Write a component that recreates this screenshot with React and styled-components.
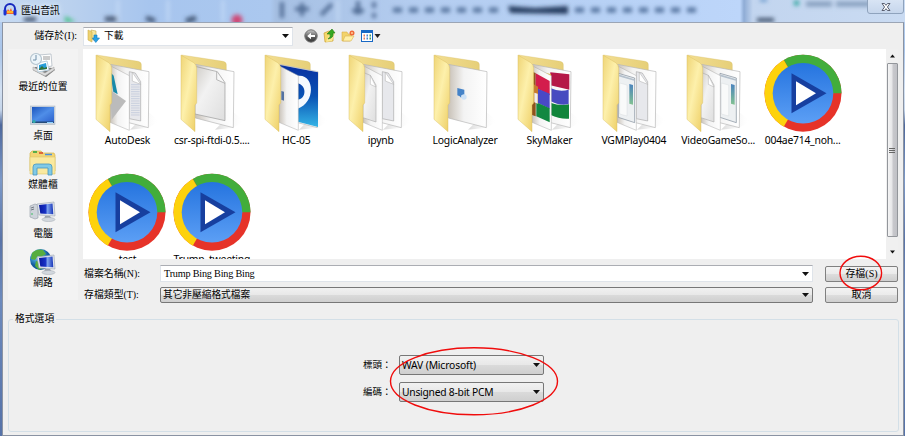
import React from "react";
import styled, { createGlobalStyle } from "styled-components";

const Global = createGlobalStyle`
  * { box-sizing: border-box; }
  body { margin: 0; overflow: hidden; background: #f0f0f0; }
`;
const mixed = `"Liberation Serif", "Noto Sans CJK TC", serif`;
const sans = `"Noto Sans", "Noto Sans CJK TC", sans-serif`;

const Window = styled.div`
  position: relative;
  width: 905px;
  height: 436px;
  display: flex;
  flex-direction: column;
  overflow: hidden;
  color: #000;
  font: 10px/16px ${sans};
  background: linear-gradient(#bcd3f1 0, #a9c5ea 50px, #d3e1f2 90px, #c5d5ea 110px, #4e689c 125px, #7c99c8 180px, #5a74a8 240px, #6c8abd 300px, #5572a8 436px);
`;
const TitleBar = styled.header`
  position: relative;
  display: flex;
  align-items: flex-start;
  height: 22px;
  background: linear-gradient(90deg, #c6daf2 0, #bad1ee 70px, #a7c5ee 150px, #abc8ef 270px, #a6c0e3 275px, #b4cdf0 420px, #b7d1f5 600px, #bdd6fa 740px, #8facd5 744px, #c2d5ef 753px, #cadbf2 905px);
`;
const Backdrop = styled.svg`
  position: absolute;
  inset: 0;
`;
const AppIcon = styled.svg`
  position: relative;
  margin: 3px 0 0 3px;
`;
const Title = styled.h1`
  position: relative;
  margin: 2px 0 0 4px;
  font: 10px/16px ${sans};
  letter-spacing: -0.4px;
  text-shadow: 0 0 6px #e6f0fb, 0 0 4px #e6f0fb;
`;
const Close = styled.button`
  position: relative;
  margin: -1px 1px 0 auto;
  width: 37px;
  height: 15px;
  padding: 0;
  border: 1px solid #8fa3bd;
  border-radius: 0 0 3px 3px;
  background: linear-gradient(#d8e4f4, #c6d6ec);
  display: flex;
  align-items: center;
  justify-content: center;
`;
const Body = styled.main`
  flex: 1;
  display: flex;
  flex-direction: column;
  margin: 0 1px 0 2px;
  padding-left: 5px;
  background: #efefef;
  border: 1px solid #8a93a3;
  border-top-color: #9ba5b5;
`;
const LookIn = styled.div`
  display: flex;
  align-items: center;
  height: 26px;
`;
const LookLabel = styled.label`
  width: 69px;
  margin-right: 6px;
  text-align: right;
  font: 10px/16px ${mixed};
`;
const Combo = styled.div`
  display: flex;
  align-items: center;
  justify-content: space-between;
  width: ${p => p.$w}px;
  height: ${p => p.$h}px;
  padding: 0 3px 0 ${p => (p.$flat ? 3 : 2)}px;
  font: ${p => p.$font ?? `9.7px/14px ${sans}`};
  letter-spacing: ${p => p.$track ?? 0}px;
  white-space: nowrap;
  border: 1px solid ${p => (p.$flat ? "#dfe4ea" : "#777")};
  border-top-color: ${p => (p.$flat ? "#abadb3" : "#777")};
  border-radius: ${p => (p.$flat ? 0 : 2)}px;
  background: ${p => (p.$flat ? "#fff" : "linear-gradient(#f1f1f1, #e8e8e8 48%, #dadada 52%, #cfcfcf)")};
`;
const ComboText = styled.span`
  display: flex;
  align-items: center;
  gap: 4px;
`;
const Tools = styled.div`
  display: flex;
  align-items: center;
  margin-left: 11px;
`;
const Browser = styled.div`
  display: flex;
  gap: 5px;
  height: 251px;
`;
const Places = styled.nav`
  width: 70px;
  height: 251px;
  background: #f3f3f3;
`;
const Place = styled.a`
  display: flex;
  flex-direction: column;
  align-items: center;
  height: 49px;
  padding-top: 3px;
  font: 9.8px/14px ${sans};
  svg { flex: none; margin-bottom: 1px; }
`;
const Pane = styled.section`
  flex: 1;
`;
const FileView = styled.div`
  display: flex;
  width: 815px;
  height: 210px;
  background: #fff;
  overflow: hidden;
`;
const Files = styled.div`
  flex: 1;
  display: grid;
  grid-template-columns: repeat(9, 84.4px);
  grid-auto-rows: 119px;
  padding: 3.7px 0 0 2.3px;
`;
const File = styled.div`
  display: flex;
  flex-direction: column;
  align-items: center;
  svg { flex: none; }
`;
const FileName = styled.span`
  font: 10.4px/15px ${sans};
  letter-spacing: ${p => p.$track ?? -0.2}px;
  white-space: nowrap;
`;
const Scroll = styled.div`
  width: 12px;
  display: flex;
  flex-direction: column;
  align-items: center;
  background: #f0f0f0;
`;
const Step = styled.div`
  height: 14px;
  display: flex;
  align-items: center;
`;
const Thumb = styled.div`
  width: 11px;
  height: 174px;
  margin-bottom: 13px;
  border: 1px solid #93969b;
  border-radius: 1px;
  background: linear-gradient(90deg, #f5f5f5, #e6e6e8 45%, #c8c8cc 55%, #c0c1c6);
  display: flex;
  flex-direction: column;
  align-items: center;
  justify-content: center;
  gap: 1px;
`;
const Grip = styled.i`
  width: 6px;
  height: 1px;
  background: #666;
`;
const FieldRow = styled.div`
  display: flex;
  align-items: center;
  margin-top: ${p => p.$top}px;
  height: 17px;
`;
const FieldLabel = styled.label`
  width: 77px;
  padding-left: 1px;
  font: 9.9px/16px ${mixed};
`;
const Button = styled.button`
  width: 73px;
  height: 16px;
  padding: 0;
  margin-left: 12px;
  border: 1px solid #808080;
  border-radius: 2px;
  font: 10px/13px ${mixed};
  color: #000;
  background: linear-gradient(#f3f3f3, #ebebeb 48%, #dddddd 52%, #cfcfcf);
`;
const Options = styled.fieldset`
  margin: 10px 0 0;
  width: 891px;
  height: 122px;
  padding: 27px 0 0;
  min-width: 0;
  border: 1px solid #d3dfe7;
  border-radius: 3px;
`;
const Legend = styled.legend`
  margin-left: 4px;
  padding: 0 2px;
  font: 9.8px/18px ${sans};
`;
const OptionRow = styled.div`
  display: flex;
  align-items: center;
  height: 20px;
  margin: 0 0 7px 354px;
`;
const OptionLabel = styled.label`
  width: 36px;
  white-space: nowrap;
  font: 9.5px/16px ${sans};
`;
const Mark = styled.svg`
  position: absolute;
  inset: 0;
  pointer-events: none;
`;
const Palette = styled.svg`
  display: block;
`;

const Arrow = ({ up, w = 7 }) => (
  <svg width={w} height="4" viewBox="0 0 7 4"><path d={up ? "M0 4L3.5 0L7 4Z" : "M0 0H7L3.5 4Z"} fill="#111" /></svg>
);

function Defs() {
  return (
    <Palette width="0" height="0" aria-hidden="true">
      <defs>
        <linearGradient id="front" x1="0" y1="0" x2="1" y2="1"><stop offset="0" stopColor="#efd577" /><stop offset=".45" stopColor="#fdf0ab" /><stop offset="1" stopColor="#edcd62" /></linearGradient>
        <linearGradient id="back" x1="0" y1="0" x2="1" y2="0"><stop offset="0" stopColor="#f3de91" /><stop offset="1" stopColor="#e6cf78" /></linearGradient>
        <linearGradient id="page" x1="0" y1="0" x2="1" y2="0"><stop offset="0" stopColor="#c9c2b8" /><stop offset=".4" stopColor="#f3f3f3" /><stop offset="1" stopColor="#fff" /></linearGradient>
        <linearGradient id="doc" x1="0" y1="0" x2="1" y2="1"><stop offset="0" stopColor="#d0cdc8" /><stop offset=".4" stopColor="#f2f2f2" /><stop offset="1" stopColor="#dedede" /></linearGradient>
        <linearGradient id="ocean" x1="0" y1="0" x2="0" y2="1"><stop offset="0" stopColor="#0930a0" /><stop offset=".5" stopColor="#0952b4" /><stop offset="1" stopColor="#35b4e6" /></linearGradient>
        <linearGradient id="shot" x1="0" y1="0" x2="0" y2="1"><stop offset="0" stopColor="#4b83bd" /><stop offset="1" stopColor="#82c292" /></linearGradient>
        <linearGradient id="disc" x1="0" y1="0" x2="0" y2="1"><stop offset="0" stopColor="#2574df" /><stop offset="1" stopColor="#5c9ff5" /></linearGradient>
        <linearGradient id="screen" x1="0" y1="0" x2="1" y2="1"><stop offset="0" stopColor="#1d55bd" /><stop offset=".5" stopColor="#4f8ee8" /><stop offset="1" stopColor="#2c60cc" /></linearGradient>
        <linearGradient id="glass" x1="0" y1="0" x2="1" y2="0"><stop offset="0" stopColor="#0818a0" /><stop offset=".45" stopColor="#1630c4" /><stop offset=".6" stopColor="#7ca2ee" /><stop offset="1" stopColor="#1734b8" /></linearGradient>
        <linearGradient id="shade" x1="0" y1="0" x2="1" y2="0"><stop offset="0" stopColor="#c4c4c4" /><stop offset="1" stopColor="#fff" stopOpacity="0" /></linearGradient>
        <radialGradient id="globe" cx=".35" cy=".3"><stop offset="0" stopColor="#b4e4fa" /><stop offset=".6" stopColor="#3a93cc" /><stop offset="1" stopColor="#125a9c" /></radialGradient>
        <linearGradient id="silver" x1="0" y1="0" x2="0" y2="1"><stop offset="0" stopColor="#ccc" /><stop offset=".5" stopColor="#666" /><stop offset="1" stopColor="#333" /></linearGradient>
      </defs>
    </Palette>
  );
}

const Sleeve = () => <path d="M90 52L148 82V246L90 222Z" fill="url(#page)" stroke="#aaa" strokeWidth="1.5" />;
const RearDoc = () => (
  <g><path d="M148 70L166 74L182 100V218L148 211Z" fill="#e7e8ec" stroke="#999" strokeWidth="1.6" /><path d="M157 72V98L182 108Z" fill="#fff" stroke="#aaa" strokeWidth="1.5" /></g>
);
const FrontDoc = () => (
  <g><path d="M90 72L112 81L129 110V221L90 208Z" fill="url(#doc)" stroke="#aaa" strokeWidth="1.8" /><path d="M112 81V108L129 116Z" fill="#fff" stroke="#aaa" strokeWidth="1.5" /></g>
);
const Panel = ({ x }) => (
  <g transform={`translate(${x} 0)`}><path d="M94 75L143 89V223L94 207Z" fill="#edf0f2" stroke="#7e8b98" strokeWidth="2" /><path d="M95 81L142 95" stroke="#b4c0cc" strokeWidth="5" /><path d="M98 104L120 110V203L98 197Z" fill="#f9fafa" stroke="#cbd1d5" /><path d="M127 107L138 110V169L127 166Z" fill="url(#shot)" /></g>
);
const contents = {
  autodesk: <><RearDoc /><path d="M153 109H179M153 116H179M153 123H179M153 130H179M153 137H179M153 144H179M153 151H179M153 158H179M153 165H179M153 172H179M153 179H179M153 186H179M153 193H179M153 200H179" stroke="#bac3d8" strokeWidth="2" /><Sleeve /><path d="M90 70L101 82L113 138L100 130Z" fill="#188aa9" /><path d="M90 125L138 158L95 214Z" fill="#bbb" /></>,
  csr: <path d="M90 54L157 70L180 103V217L90 197Z M155 71V94L180 105" fill="url(#doc)" stroke="#999" strokeWidth="2" />,
  hc: <><path d="M92 50L207 72V236L92 206Z" fill="url(#ocean)" /><path d="M144 83C195 72 204 160 146 181L144 154C174 154 174 108 144 105Z" fill="#f5f9fe" /><Sleeve /><path d="M97 128L105 130V157L97 154Z" fill="#5472a1" /></>,
  ipynb: <><RearDoc /><Sleeve /><FrontDoc /></>,
  logic: <><path d="M118 119L139 124V143L130 141V149L125 144L118 141Z" fill="#4583c8" /><circle cx="138" cy="146" r="8" fill="#cde2f7" /></>,
  sky: <><path d="M145 72L202 78L202 124L145 111Z" fill="#b51848" /><path d="M145 119Q172 132 200 124V167Q174 174 145 158Z" fill="#474bc0" /><path d="M145 163Q174 174 201 168V211Q173 213 145 199Z" fill="#11853b" /><path d="M117 70L147 78V85Z" fill="#f2c91a" /><Sleeve /><path d="M90 70L101 74V204L90 200Z" fill="#8e521b" /><path d="M101 75L143 98V141L101 118Z" fill="#d31d4c" /><path d="M103 119L143 136V181L103 162Z" fill="#4949c6" /><path d="M103 162L143 180V222L103 204Z" fill="#128841" /><path d="M90 105L108 115V166L90 158Z" fill="#c77c2d" /><path d="M97 133L107 136V166L97 162Z" fill="#eee" /></>,
  vgm: <><RearDoc /><Sleeve /><Panel x={0} /></>,
  video: <><Panel x={53} /><Sleeve /><FrontDoc /></>,
};

function Folder({ kind }) {
  return (
    <svg width="66.67" height="80" viewBox="42 14 200 240">
      <path d="M204 190L238 219L205 238L150 244Z" fill="url(#shade)" opacity=".65" />
      <path d="M50 20L174 39Q184 41 184 49V100L90 140Z" fill="url(#back)" stroke="#d9c06a" strokeWidth="1" />
      <path d="M91 48L207 70L205 238L91 209Z" fill="url(#page)" stroke="#b5b5b5" strokeWidth="2" />
      {contents[kind]}
      <path d="M48 20L86 43Q95 49 95 60V164L90 170V250L48 213Z" fill="url(#front)" stroke="#d9bd61" strokeWidth="1.3" />
    </svg>
  );
}

function Player() {
  return (
    <svg width="80" height="80" viewBox="-40 -40.3 80 80">
      <circle r="38.5" fill="#e63329" />
      <path d="M0 0L38.5 0A38.5 38.5 0 0 0 -19.25 -33.34Z" fill="#42ad3b" />
      <path d="M0 0L-19.25 -33.34A38.5 38.5 0 0 0 -19.25 33.34Z" fill="#fdd20c" />
      <circle r="30.3" fill="url(#disc)" />
      <path d="M-11.5 -20L23.5 0L-11.5 20Z" fill="#173f9f" />
      <path d="M-7 -12L13 0L-7 12Z" fill="#fff" />
    </svg>
  );
}

const Monitor = () => (
  <g><path d="M9 5L26 3L27 17L11 16Z" fill="#e1e5ec" stroke="#98a2b0" strokeWidth=".6" /><path d="M11 6L24.5 4.5L25.3 15.2L12.3 14.6Z" fill="url(#glass)" /><path d="M17 17L22 17L24 20H16Z" fill="#9ca4ae" /><ellipse cx="20.5" cy="20.5" rx="6.5" ry="2" fill="#d3d8de" stroke="#a1a8b0" strokeWidth=".5" /></g>
);
const placeArt = {
  recent: <><path d="M5 18L18 25L27 18L25 16L7 15Z" fill="#777" /><path d="M5 15L17 21L26 15V18L17 24L5 18Z" fill="#ddd" stroke="#aaa" strokeWidth=".6" /><path d="M11 3L23 2L24 14L13 16Z" fill="#fff" stroke="#aab5bf" strokeWidth=".7" /><path d="M15 5H22M15 7H22" stroke="#999" /><path d="M9 11L19 9L21 18L10 20Z" fill="#fff" stroke="#b9d0df" /><path d="M11 13L18 11L19 17L11 18Z" fill="#279cd8" /><path d="M11 17L14 14L16 16L19 15V17L11 18Z" fill="#33733a" /><circle cx="8" cy="7" r="5.5" fill="#edf5fa" stroke="#b4c4cf" strokeWidth="1.2" /><path d="M8 3V8H5" fill="none" stroke="#718fa8" /></>,
  desktop: <><rect x="2.5" y="5" width="24.5" height="18.5" fill="#c8d3df" stroke="#a8b1ba" strokeWidth=".5" /><rect x="4" y="6" width="22" height="15" fill="url(#screen)" /><path d="M4 20.5H26V22H4Z" fill="#254b78" /><circle cx="6" cy="20.5" r="1.7" fill="#31a6ab" /><path d="M19 21.5H25" stroke="#8bd0ff" /></>,
  library: <><path d="M2 3L4 1H13L15 3H26L27 5V21H2Z" fill="#f3d574" stroke="#d5b84f" strokeWidth=".7" /><path d="M5 2H9" stroke="#26a23e" strokeWidth="1.5" /><path d="M11 3H15" stroke="#d84328" strokeWidth="1.5" /><path d="M17 4.5H24" stroke="#4891e2" strokeWidth="1.5" /><path d="M2 7H27V24H2Z" fill="#fae99f" stroke="#dfc76a" strokeWidth=".6" /><path d="M5 25V17Q5 14 8 14H21Q24 14 24 17V25H20V18H9V25Z" fill="#81cae7" stroke="#4696bf" strokeWidth=".8" /></>,
  computer: <><path d="M2 7L7 5L10 6V19L7 20L2 18Z" fill="#ced3da" stroke="#929ba6" strokeWidth=".6" /><path d="M3 9L6 8M3 11L6 10" stroke="#717983" /><circle cx="4" cy="15" r=".8" fill="#2ebd55" /><Monitor /></>,
  network: <><circle cx="12.5" cy="11.5" r="10.5" fill="url(#globe)" /><path d="M4 5Q9 0 15 2L18 6L13 9L10 8L7 12L3 11ZM8 13L13 14L15 20L11 22L7 18Z" fill="#56ad3f" /><g transform="translate(0 4)"><Monitor /></g></>,
};
const places = [["recent", "最近的位置"], ["desktop", "桌面"], ["library", "媒體櫃"], ["computer", "電腦"], ["network", "網路"]];
const files = [
  ["autodesk", "AutoDesk"], ["csr", "csr-spi-ftdi-0.5....", -0.25], ["hc", "HC-05"], ["ipynb", "ipynb"], ["logic", "LogicAnalyzer"], ["sky", "SkyMaker"],
  ["vgm", "VGMPlay0404"], ["video", "VideoGameSo..."], ["player", "004ae714_noh...", -0.25], ["player", "test"], ["player", "Trump_tweeting"],
];

function BackdropArt() {
  return (
    <Backdrop width="905" height="22">
      <defs><filter id="soft"><feGaussianBlur stdDeviation="1.9" /></filter></defs>
      <g filter="url(#soft)">
        <path d="M118 0V22M168 0V22M223 0V22M338 0V22" stroke="#cadef7" strokeWidth="2" />
        <path d="M24 19H36M105 19H117" stroke="#465873" strokeWidth="5" />
        <path d="M65 16L76 22H65Z" fill="#40c080" />
        <path d="M146 18L155 21M186 21L196 18" stroke="#425775" strokeWidth="5" />
        <circle cx="237" cy="20" r="5.5" fill="#cf4775" />
        <path d="M282 2V18M295 9H309M302 3V16M321 15L332 4M358 1V11M353 9Q358 16 363 9M374 2V8M374 13V18" stroke="#526e96" strokeWidth="4" fill="none" />
        <path d="M393 10H505" stroke="#56749e" strokeWidth="5" strokeDasharray="9 7" />
        <path d="M508 6L535 8L568 6V14L510 13Z" fill="#283e60" />
        <path d="M575 10H699" stroke="#55739e" strokeWidth="5" strokeDasharray="9 7" />
        <path d="M757 20H774" stroke="#3f516b" strokeWidth="4" />
        <path d="M794 3H799" stroke="#31a7a1" strokeWidth="5" />
        <path d="M806 4H832M836 4H875" stroke="#708bac" strokeWidth="5" opacity=".75" />
        <path d="M760 0H767" stroke="#6192c8" strokeWidth="3" />
      </g>
    </Backdrop>
  );
}

const DownloadFolder = () => (
  <svg width="13" height="14" viewBox="0 0 13 14"><path d="M4 1L9 2V12L4 10Z" fill="#f7e59a" stroke="#c8aa4c" strokeWidth=".6" /><path d="M1 1L5 3V13L1 11Z" fill="#eed270" stroke="#cfae4b" strokeWidth=".6" /><path d="M7 6H10V9H12.5L8.8 13.5L5.3 9H7Z" fill="#29a1e5" stroke="#167cbd" strokeWidth=".6" /></svg>
);
const ToolIcons = () => (
  <svg width="80" height="16" viewBox="0 0 80 16">
    <circle cx="7" cy="8" r="6.2" fill="url(#silver)" stroke="#737373" /><path d="M3.2 8L7 4.7V7H11V9H7V11.3Z" fill="#fff" />
    <path d="M20 5L25 3L29 4V13L21 14Z" fill="#f6d86b" stroke="#c89e32" strokeWidth=".7" /><path d="M22 14L25 7L31 5L28 13Z" fill="#fae894" /><path d="M24 11Q27 9 26 6H23L28 1L31 5H29Q30 10 24 11Z" fill="#35a820" stroke="#227915" strokeWidth=".6" />
    <path d="M38 4H43L44 6H48L46 13H38Z" fill="#f3d36a" stroke="#d6ae4a" strokeWidth=".6" /><path d="M39 13L41 8H50L47 13Z" fill="#fff0a7" stroke="#d7b354" strokeWidth=".6" /><circle cx="48" cy="5" r="2.5" fill="#ef6938" /><circle cx="48" cy="5" r="1" fill="#ffcf9e" />
    <rect x="57.5" y="2.5" width="11" height="11" fill="#fff" stroke="#1868c5" /><path d="M57 3.5H69" stroke="#1868c5" strokeWidth="3" /><path d="M59.5 7.5H61M59.5 10.5H61" stroke="#e5795c" strokeWidth="2" /><path d="M62.5 7.5H64M62.5 10.5H64" stroke="#4b83d2" strokeWidth="2" /><path d="M65.5 7.5H67M65.5 10.5H67" stroke="#3d9862" strokeWidth="2" />
    <path d="M70.5 6H76.5L73.5 10Z" fill="#222" />
  </svg>
);

export default function App() {
  return (
    <>
      <Global />
      <Defs />
      <Window>
        <TitleBar>
          <BackdropArt />
          <AppIcon width="14" height="13" viewBox="0 0 14 13"><path d="M2 8V6A5 5 0 0 1 12 6V8" fill="none" stroke="#1727bd" strokeWidth="2" /><path d="M4 8L5 6L6.5 8L8 5L9 8H11V11H3V8Z" fill="#f5652e" /><path d="M4 9H10" stroke="#ffb526" strokeWidth="2" /><rect x="0.5" y="6" width="3" height="6.5" rx="1.5" fill="#1a33d1" /><rect x="10.5" y="6" width="3" height="6.5" rx="1.5" fill="#1a33d1" /></AppIcon>
          <Title>匯出音訊</Title>
          <Close aria-label="關閉"><svg width="10" height="8" viewBox="0 0 10 8"><path d="M1 .5H3.5L5 2.3L6.5 .5H9L6.4 4L9 7.5H6.5L5 5.7L3.5 7.5H1L3.6 4Z" fill="#fff" stroke="#4d5264" strokeWidth=".9" /></svg></Close>
        </TitleBar>
        <Body>
          <LookIn>
            <LookLabel>儲存於(I):</LookLabel>
            <Combo $flat $w={210} $h={19}><ComboText><DownloadFolder />下載</ComboText><Arrow /></Combo>
            <Tools><ToolIcons /></Tools>
          </LookIn>
          <Browser>
            <Places>
              {places.map(([kind, name]) => <Place key={kind}><svg width="30" height="27" viewBox="0 0 30 27">{placeArt[kind]}</svg>{name}</Place>)}
            </Places>
            <Pane>
              <FileView>
                <Files>
                  {files.map(([kind, name, track]) => <File key={name}>{kind === "player" ? <Player /> : <Folder kind={kind} />}<FileName $track={track}>{name}</FileName></File>)}
                </Files>
                <Scroll><Step><Arrow up w={5} /></Step><Thumb><Grip /><Grip /><Grip /></Thumb><Arrow w={5} /></Scroll>
              </FileView>
              <FieldRow $top={6}>
                <FieldLabel>檔案名稱(N):</FieldLabel>
                <Combo $flat $w={653} $h={17} $font={`10.2px/14px ${mixed}`} $track={-0.2}>Trump Bing Bing Bing<Arrow /></Combo>
                <Button>存檔(S)</Button>
              </FieldRow>
              <FieldRow $top={4}>
                <FieldLabel>存檔類型(T):</FieldLabel>
                <Combo $w={653} $h={16}>其它非壓縮格式檔案<Arrow /></Combo>
                <Button>取消</Button>
              </FieldRow>
            </Pane>
          </Browser>
          <Options>
            <Legend>格式選項</Legend>
            <OptionRow><OptionLabel>標頭：</OptionLabel><Combo $w={145} $h={20} $font={`10.3px/16px ${sans}`} $track={-0.13}>WAV (Microsoft)<Arrow /></Combo></OptionRow>
            <OptionRow><OptionLabel>編碼：</OptionLabel><Combo $w={145} $h={20} $font={`10.3px/16px ${sans}`} $track={-0.24}>Unsigned 8-bit PCM<Arrow /></Combo></OptionRow>
          </Options>
        </Body>
        <Mark width="905" height="436" fill="none" stroke="#f00c0c" strokeWidth="1.4">
          <ellipse cx="860.8" cy="273" rx="20.8" ry="16.8" />
          <ellipse cx="474" cy="381.3" rx="83.5" ry="33.5" />
        </Mark>
      </Window>
    </>
  );
}
